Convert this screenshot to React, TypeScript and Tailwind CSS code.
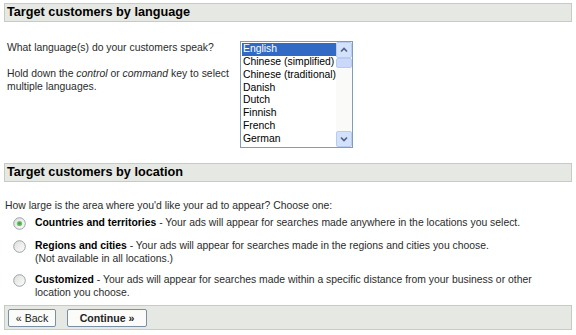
import React from "react";

const languages = [
  "English",
  "Chinese (simplified)",
  "Chinese (traditional)",
  "Danish",
  "Dutch",
  "Finnish",
  "French",
  "German",
];

function Radio({ checked }: { checked?: boolean }) {
  return (
    <svg width="13" height="13" viewBox="0 0 13 13" className="shrink-0">
      <defs>
        <linearGradient id={checked ? "rg1" : "rg0"} x1="0" y1="0" x2="1" y2="1">
          <stop offset="0" stopColor="#dcdcd7" />
          <stop offset="1" stopColor="#ffffff" />
        </linearGradient>
      </defs>
      <circle cx="6.5" cy="6.5" r="5.8" fill={`url(#${checked ? "rg1" : "rg0"})`} stroke="#9aa3ab" strokeWidth="1" />
      {checked && (
        <>
          <circle cx="6.5" cy="6.5" r="2.6" fill="#6cc26a" />
          <circle cx="6.5" cy="6.5" r="1.3" fill="#3fa53d" />
        </>
      )}
    </svg>
  );
}

function Arrow({ up }: { up?: boolean }) {
  return (
    <div className="w-[16px] h-[16px] rounded-[2px] border border-[#b8ccf2] bg-[#d4e1fb] flex items-center justify-center">
      <svg width="8" height="6" viewBox="0 0 8 6">
        <path
          d={up ? "M1 4.5 L4 1.5 L7 4.5" : "M1 1.5 L4 4.5 L7 1.5"}
          fill="none"
          stroke="#4d6185"
          strokeWidth="1.6"
        />
      </svg>
    </div>
  );
}

export default function App() {
  return (
    <div className="w-[576px] h-[335px] bg-white font-['Liberation_Sans',Arial,sans-serif] text-[10.4px] leading-[13px] text-[#2b2b2b] overflow-hidden">
      <div className="pt-[3px] px-[4px]">
        <div className="h-[19px] border border-[#c7cbc4] bg-[#e6e8e3] pl-[2px] flex items-center text-[12.7px] font-bold text-black">
          Target customers by language
        </div>
      </div>

      <div className="flex mt-[19px]">
        <div className="pl-[7px] w-[240px]">
          <p>What language(s) do your customers speak?</p>
          <p className="mt-[13px] pr-[6px]">
            Hold down the <i>control</i> or <i>command</i> key to select multiple languages.
          </p>
        </div>
        <div className="w-[113px] h-[107px] border border-[#7f9db9] bg-white flex">
          <div className="flex-1 pt-[1px] pl-[1px] text-black">
            {languages.map((l, i) => (
              <div
                key={l}
                className={
                  "h-[12.85px] leading-[12.85px] pl-[1px] whitespace-nowrap " +
                  (i === 0 ? "bg-[#316ac5] text-white" : "")
                }
              >
                {l}
              </div>
            ))}
          </div>
          <div className="w-[16px] bg-[#fafaf8] flex flex-col">
            <Arrow up />
            <div className="h-[10px] border border-[#b8ccf2] bg-[#c9d8fb] rounded-[2px]" />
            <div className="flex-1" />
            <Arrow />
          </div>
        </div>
      </div>

      <div className="px-[4px] mt-[15px]">
        <div className="h-[19px] border border-[#c7cbc4] bg-[#e6e8e3] pl-[2px] flex items-center text-[12.7px] font-bold text-black">
          Target customers by location
        </div>
      </div>

      <p className="pl-[5px] mt-[17px]">How large is the area where you'd like your ad to appear? Choose one:</p>

      <div className="mt-[4px] flex flex-col gap-[9px]">
        <div className="flex items-start">
          <div className="w-[35px] pl-[13px] pt-[1px]">
            <Radio checked />
          </div>
          <div>
            <b className="font-bold text-black">Countries and territories</b> - Your ads will appear for searches made anywhere in the locations you select.
          </div>
        </div>
        <div className="flex items-start">
          <div className="w-[35px] pl-[13px] pt-[1px]">
            <Radio />
          </div>
          <div>
            <b className="font-bold text-black">Regions and cities</b> - Your ads will appear for searches made in the regions and cities you choose.
            <br />
            (Not available in all locations.)
          </div>
        </div>
        <div className="flex items-start mt-[-1px]">
          <div className="w-[35px] pl-[13px] pt-[1px]">
            <Radio />
          </div>
          <div>
            <b className="font-bold text-black">Customized</b> - Your ads will appear for searches made within a specific distance from your business or other
            <br />
            location you choose.
          </div>
        </div>
      </div>

      <div className="px-[4px] mt-[6px]">
        <div className="h-[25px] border border-[#c7cbc4] bg-[#e6e8e3] flex items-center pl-[3px] gap-[11px]">
          <button className="w-[48px] h-[18px] rounded-[2px] border border-[#7a8ea6] bg-[#fbfbf9] text-[10.6px] leading-[16px] text-[#222] flex items-center justify-center">
            « Back
          </button>
          <button className="w-[80px] h-[18px] rounded-[2px] border border-[#7a8ea6] bg-[#fbfbf9] text-[10.6px] leading-[16px] font-bold text-[#222] flex items-center justify-center">
            Continue »
          </button>
        </div>
      </div>
    </div>
  );
}
